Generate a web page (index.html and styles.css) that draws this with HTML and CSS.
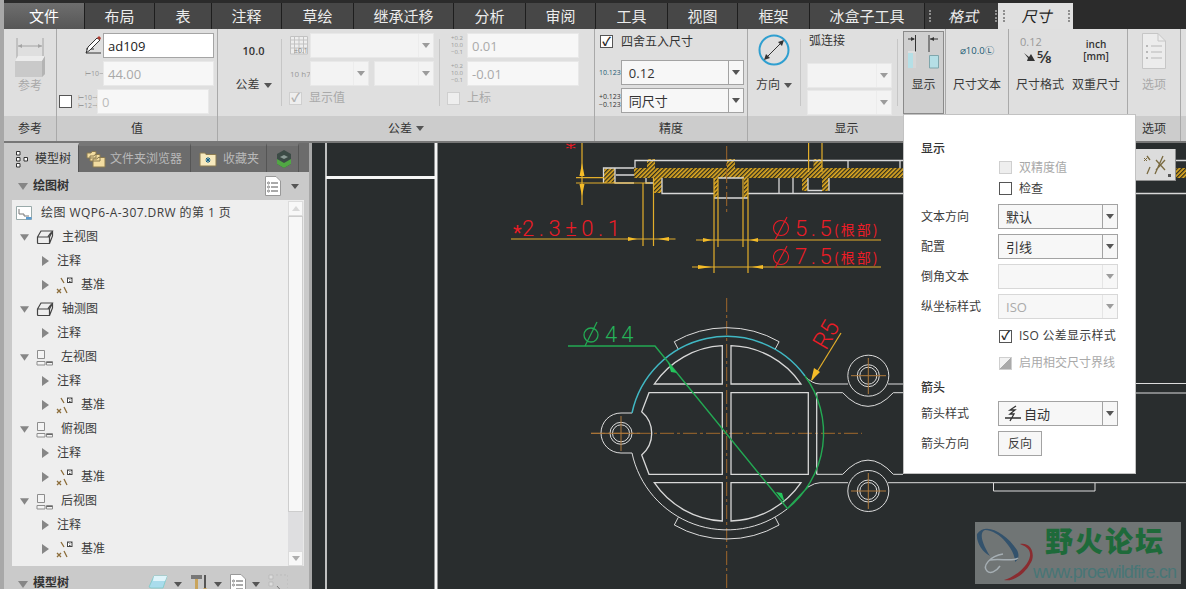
FILE: index.html
```html
<!DOCTYPE html>
<html lang="zh">
<head>
<meta charset="utf-8">
<title>尺寸</title>
<link rel="stylesheet" href="styles.css">
</head>
<body>
<svg class="defs" width="0" height="0" aria-hidden="true">
  <defs>
    <symbol id="tri-d" viewBox="0 0 10 7"><path d="M0 0H10L5 7Z" fill="#868686"/></symbol>
    <symbol id="tri-r" viewBox="0 0 7 10"><path d="M0 0V10L7 5Z" fill="#868686"/></symbol>
    <symbol id="arr" viewBox="0 0 8 5"><path d="M0 0H8L4 5Z" fill="#555"/></symbol>
    <symbol id="solid" viewBox="0 0 18 16"><path d="M1.500 8 5 2H16.500L13.500 8V14.500H2.500Q1.500 14.500 1.500 13.500ZM1.500 8H13.500M16.500 2V7L13.500 14.500M15 3.500 12 7.500" fill="none" stroke="#444" stroke-width="1.200"/></symbol>
    <symbol id="views" viewBox="0 0 17 17"><path d="M1.500 1.500H8.500V9.500H1.500ZM1 12.500H9V16H1ZM10.500 12.500H16.500V16H10.500Z" fill="#f4f4f4" stroke="#8d8d8d"/><path d="M10.500 13H16.500V14H10.500Z" fill="#666"/></symbol>
    <symbol id="datum" viewBox="0 0 17 17"><path d="M5 1 8 6M8 10 11 16" stroke="#8c6d3a" stroke-width="1.300"/><path d="M1 12 5 16M5 12 1 16" stroke="#8c6d3a" stroke-width="1.300"/><path d="M11 .5H16.500V6H11Z" fill="#444"/><path d="M12.500 5V2H15V5M12.500 3.600H15" fill="none" stroke="#fff"/></symbol>
  </defs>
</svg>

<nav class="tabbar">
  <div class="tab tab-file">文件</div>
  <div class="tab">布局</div>
  <div class="tab">表</div>
  <div class="tab">注释</div>
  <div class="tab">草绘</div>
  <div class="tab">继承迁移</div>
  <div class="tab">分析</div>
  <div class="tab">审阅</div>
  <div class="tab">工具</div>
  <div class="tab">视图</div>
  <div class="tab">框架</div>
  <div class="tab">冰盒子工具</div>
  <div class="tab tab-ctx">格式</div>
  <div class="tab tab-active">尺寸</div>
</nav>

<section class="ribbon">
  <div class="group g-ref">
    <div class="gbody">
      <div class="rbtn rbtn-ref">
        <svg class="ico-ref" width="30" height="42" viewBox="0 0 30 42"><path d="M2 2V22M28 2V22M3 10H27" fill="none" stroke="#a4a4a4"/><path d="M3 10 7 8V12ZM27 10 23 8V12Z" fill="#a4a4a4"/><path d="M0 25 3 20H30V38L27 41H0Z" fill="#c9c9c9"/><path d="M3 20H30L27 25H0Z" fill="#ececec"/><path d="M27 25 30 20V38L27 41Z" fill="#b4b4b4"/></svg>
        <span class="lbl off">参考</span>
      </div>
    </div>
    <div class="glabel">参考</div>
  </div>

  <div class="group g-val">
    <div class="gbody val-body">
      <div class="val-row">
        <svg width="17" height="19" viewBox="0 0 17 19"><path d="M1 17H16M1 13H4M6 13H9" stroke="#333" fill="none"/><path d="M1 17 3 11 12 2 15 4 5 14Z" fill="#fff" stroke="#333"/><path d="M12 2 14 0 16 2 15 4Z" fill="#b03a2e"/></svg>
        <div class="inp inp-strong">ad109</div>
      </div>
      <div class="val-row">
        <span class="dimtag">⊢10⊣</span>
        <div class="inp inp-off">44.00</div>
      </div>
      <div class="val-row val-row3">
        <span class="chk chk-dark"></span>
        <span class="dimtag dimtag2">⊢10⊣<br>⊢12⊣</span>
        <div class="inp inp-off inp-light">0</div>
      </div>
    </div>
    <div class="glabel">值</div>
  </div>

  <div class="group g-tol">
    <div class="gbody tol-body">
      <div class="tol-a">
        <span class="ten">10.0</span>
        <span class="lbl drop">公差 <svg width="8" height="5"><use href="#arr"/></svg></span>
      </div>
      <i class="vsep"></i>
      <div class="tol-b">
        <div class="tol-row">
          <svg class="tbl-ico" width="18" height="19" viewBox="0 0 18 19"><path d="M.5 .5H17.500V18H.5ZM.5 4H17.500M.5 8H17.500M.5 12H17.500M4.500 .5V18M9 .5V18M13.500 .5V18" fill="#eee" stroke="#c2c2c2"/><text x="4" y="17" class="tiny-t">±0.1</text></svg>
          <div class="sel sel-off sel-124"><span></span><b><svg width="8" height="5"><use href="#arr"/></svg></b></div>
        </div>
        <div class="tol-row">
          <span class="h7">10 h7</span>
          <div class="sel sel-off sel-59"><span></span><b><svg width="8" height="5"><use href="#arr"/></svg></b></div>
          <div class="sel sel-off sel-60"><span></span><b><svg width="8" height="5"><use href="#arr"/></svg></b></div>
        </div>
        <div class="tol-check">
          <span class="chk chk-off chk-on">✓</span><span class="off">显示值</span>
        </div>
      </div>
      <i class="vsep"></i>
      <div class="tol-c">
        <div class="tol-row">
          <span class="pm"><span>+0.2</span><span>10.0</span><span>−0.1</span></span>
          <div class="inp inp-off inp-112">0.01</div>
        </div>
        <div class="tol-row">
          <span class="pm"><span>+0.2</span><span>10.0</span><span>−0.1</span></span>
          <div class="inp inp-off inp-112">-0.01</div>
        </div>
        <div class="tol-check">
          <span class="chk chk-off"></span><span class="off">上标</span>
        </div>
      </div>
    </div>
    <div class="glabel">公差 <svg width="8" height="5"><use href="#arr"/></svg></div>
  </div>

  <div class="group g-pre">
    <div class="gbody pre-body">
      <div class="pre-check"><span class="chk chk-dark chk-on">✓</span>四舍五入尺寸</div>
      <div class="pre-row"><span class="pre-ico">10.123</span><div class="sel sel-125"><span>0.12</span><b><svg width="8" height="5"><use href="#arr"/></svg></b></div></div>
      <div class="pre-row"><span class="pre-ico pre-ico2">+0.123<br>−0.123</span><div class="sel sel-125"><span>同尺寸</span><b><svg width="8" height="5"><use href="#arr"/></svg></b></div></div>
    </div>
    <div class="glabel">精度</div>
  </div>

  <div class="group g-dsp">
    <div class="gbody dsp-body">
      <div class="rbtn rbtn-dir">
        <svg width="32" height="34" viewBox="0 0 32 34"><circle cx="16" cy="17" r="14.500" fill="none" stroke="#2f9fd0" stroke-width="2"/><path d="M7 26 25 8" stroke="#333"/><path d="M6 27 8 21 12 25ZM26 7 20 9 24 13Z" fill="#333"/></svg>
        <span class="lbl drop">方向 <svg width="8" height="5"><use href="#arr"/></svg></span>
      </div>
      <i class="vsep"></i>
      <div class="arc-col">
        <div class="arc-title">弧连接</div>
        <div class="sel sel-off sel-85"><span></span><b><svg width="8" height="5"><use href="#arr"/></svg></b></div>
        <div class="sel sel-off sel-85"><span></span><b><svg width="8" height="5"><use href="#arr"/></svg></b></div>
      </div>
      <i class="vsep vsep-r"></i>
      <div class="rbtn rbtn-show">
        <svg width="32" height="36" viewBox="0 0 32 36"><path d="M7.500 1V18M21 1V18M0 5H6M22 5H30" fill="none" stroke="#333"/><path d="M7 5 3 3V7ZM22 5 26 3V7Z" fill="#333"/><path d="M0 19H8V34H0Z" fill="#b5dfe6"/><path d="M0 18 H8" stroke="#eee"/><path d="M5 19H8V34H5Z" fill="#d6d6d6"/><path d="M21.500 21.500H30.500V34H21.500Z" fill="#b5dfe6" stroke="#7fa6ac"/></svg>
        <span class="lbl">显示</span>
      </div>
    </div>
    <div class="glabel">显示</div>
  </div>

  <div class="group g-txt">
    <div class="gbody">
      <div class="rbtn">
        <div class="ico-box"><span class="dimtxt">⌀10.0Ⓛ</span></div>
        <span class="lbl">尺寸文本</span>
      </div>
    </div>
    <div class="glabel"></div>
  </div>

  <div class="group g-fmt">
    <div class="gbody fmt-body">
      <div class="rbtn">
        <div class="ico-box ico-frac">
          <span class="frac-a">0.12</span>
          <span class="frac-b"><svg width="11" height="10" viewBox="0 0 11 10"><path d="M0 1 5 5 7 2 11 9 3 9 4 6Z" fill="#333"/></svg>5⁄8</span>
        </div>
        <span class="lbl">尺寸格式</span>
      </div>
      <div class="rbtn">
        <div class="ico-box ico-inch"><span>inch</span><span>[mm]</span></div>
        <span class="lbl">双重尺寸</span>
      </div>
    </div>
    <div class="glabel"></div>
  </div>

  <div class="group g-opt">
    <div class="gbody">
      <div class="rbtn">
        <div class="ico-box">
          <svg width="24" height="36" viewBox="0 0 24 36"><path d="M.5 .5H16L23.500 8V35.500H.5Z" fill="#ececec" stroke="#c6c6c6"/><path d="M16 .5V8H23.500" fill="none" stroke="#c6c6c6"/><path d="M9 13H20M9 19H20M9 25H20" stroke="#b8b8b8"/><path d="M4 13H6M4 19H6M4 25H6" stroke="#b8b8b8" stroke-width="2"/></svg>
        </div>
        <span class="lbl off">选项</span>
      </div>
    </div>
    <div class="glabel">选项</div>
  </div>
  <div class="group g-end"><div class="gbody"></div><div class="glabel"></div></div>
</section>

<main class="work">
  <aside class="panel">
    <div class="ptabs">
      <div class="ptab ptab-on">
        <svg width="14" height="18" viewBox="0 0 14 18"><path d="M1.500 1.500H5V5H1.500ZM1.500 7.500H5V11H1.500ZM1.500 13.500H5V17H1.500ZM9 7.500H12.500V11H9Z" fill="#fff" stroke="#333"/></svg>
        模型树
      </div>
      <div class="ptab ptab-2">
        <svg width="20" height="18" viewBox="0 0 20 18"><path d="M1 3H5L6 1.500H10V8H1ZM4 6H8L9 4.500H14V11H4ZM7 9H11L12 7.500H19V17H7Z" fill="#f2dca0" stroke="#8a7a50"/></svg>
        文件夹浏览器
      </div>
      <div class="ptab ptab-3">
        <svg width="18" height="16" viewBox="0 0 18 16"><path d="M1 2H6L7 3.500H17V15H1Z" fill="#f7e9bd" stroke="#8a7a50"/><path d="M9 6V12M6.500 9H11.500M7 7 11 11M11 7 7 11" stroke="#0e5f8a"/></svg>
        收藏夹
      </div>
      <div class="ptab ptab-4">
        <svg width="16" height="18" viewBox="0 0 16 18"><path d="M8 0 15 4V14L8 18 1 14V4Z" fill="#3c4b46"/><path d="M1 9 8 13 15 9V14L8 18 1 14Z" fill="#51a744"/><path d="M4 7 8 5 12 7 8 9Z" fill="#8a9a95"/></svg>
      </div>
    </div>
    <div class="phead">
      <svg class="phead-tri" width="10" height="7"><use href="#tri-d"/></svg>
      <strong>绘图树</strong>
      <svg class="phead-doc" width="16" height="20" viewBox="0 0 16 20"><path d="M.5 .5H11L15.500 5V19.500H.5Z" fill="#fff" stroke="#999"/><path d="M6 7H13M6 11H13M6 15H13" stroke="#555"/><circle cx="3.500" cy="7" r="1" fill="none" stroke="#555" stroke-width=".7"/><circle cx="3.500" cy="11" r="1" fill="none" stroke="#555" stroke-width=".7"/><circle cx="3.500" cy="15" r="1" fill="none" stroke="#555" stroke-width=".7"/></svg>
      <svg class="phead-arr" width="8" height="5"><use href="#arr"/></svg>
    </div>
    <div class="treebox">
      <ul class="tree">
        <li class="r r-root"><svg width="16" height="14" viewBox="0 0 16 14"><path d="M.5 .5H15.500V13.500H.5Z" fill="#fff" stroke="#9aa"/><path d="M3 3V8H8V10H13" fill="none" stroke="#777"/><path d="M10 11H15.500V13.500H10Z" fill="#5a9bd0"/></svg><span>绘图 WQP6-A-307.DRW 的第 1 页</span></li>
        <li class="r r-0"><svg class="t" width="9" height="7"><use href="#tri-d"/></svg><svg width="18" height="16"><use href="#solid"/></svg><span>主视图</span></li>
        <li class="r r-1"><svg class="t" width="7" height="10"><use href="#tri-r"/></svg><span>注释</span></li>
        <li class="r r-1 r-d"><svg class="t" width="7" height="10"><use href="#tri-r"/></svg><svg width="17" height="17"><use href="#datum"/></svg><span>基准</span></li>
        <li class="r r-0"><svg class="t" width="9" height="7"><use href="#tri-d"/></svg><svg width="18" height="16"><use href="#solid"/></svg><span>轴测图</span></li>
        <li class="r r-1"><svg class="t" width="7" height="10"><use href="#tri-r"/></svg><span>注释</span></li>
        <li class="r r-0"><svg class="t" width="9" height="7"><use href="#tri-d"/></svg><svg width="17" height="17"><use href="#views"/></svg><span>左视图</span></li>
        <li class="r r-1"><svg class="t" width="7" height="10"><use href="#tri-r"/></svg><span>注释</span></li>
        <li class="r r-1 r-d"><svg class="t" width="7" height="10"><use href="#tri-r"/></svg><svg width="17" height="17"><use href="#datum"/></svg><span>基准</span></li>
        <li class="r r-0"><svg class="t" width="9" height="7"><use href="#tri-d"/></svg><svg width="17" height="17"><use href="#views"/></svg><span>俯视图</span></li>
        <li class="r r-1"><svg class="t" width="7" height="10"><use href="#tri-r"/></svg><span>注释</span></li>
        <li class="r r-1 r-d"><svg class="t" width="7" height="10"><use href="#tri-r"/></svg><svg width="17" height="17"><use href="#datum"/></svg><span>基准</span></li>
        <li class="r r-0"><svg class="t" width="9" height="7"><use href="#tri-d"/></svg><svg width="17" height="17"><use href="#views"/></svg><span>后视图</span></li>
        <li class="r r-1"><svg class="t" width="7" height="10"><use href="#tri-r"/></svg><span>注释</span></li>
        <li class="r r-1 r-d"><svg class="t" width="7" height="10"><use href="#tri-r"/></svg><svg width="17" height="17"><use href="#datum"/></svg><span>基准</span></li>
      </ul>
      <div class="sbar">
        <div class="sb-btn"><svg width="8" height="5" viewBox="0 0 8 5"><path d="M0 5H8L4 0Z" fill="#b5b5b5"/></svg></div>
        <div class="sb-thumb"></div>
        <div class="sb-track"></div>
        <div class="sb-btn"><svg width="8" height="5"><use href="#arr"/></svg></div>
      </div>
    </div>
    <div class="pfoot">
      <svg class="phead-tri" width="10" height="7"><use href="#tri-d"/></svg>
      <strong>模型树</strong>
      <div class="pfoot-tools">
        <svg width="20" height="16" viewBox="0 0 20 16"><path d="M1 13 6 2H19L15 14H3Z" fill="#a9dcec" stroke="#8cc"/><path d="M6 2H19L17 7H5Z" fill="#dff4fa"/></svg>
        <svg class="fa" width="8" height="5"><use href="#arr"/></svg>
        <svg class="ft" width="18" height="20" viewBox="0 0 18 20"><path d="M1 1H12V5H1Z" fill="#777"/><path d="M5 5H8V20H5Z" fill="#c9a45c"/><path d="M15 1V14" stroke="#555" stroke-width="2"/><path d="M13.500 14H16.500V20H13.500Z" fill="#c9a45c"/></svg>
        <svg class="fa" width="8" height="5"><use href="#arr"/></svg>
        <svg class="ft" width="16" height="20" viewBox="0 0 16 20"><path d="M.5 .5H11L15.500 5V20H.5Z" fill="#fff" stroke="#999"/><path d="M6 7H13M6 11H13M6 15H13" stroke="#555"/><circle cx="3.500" cy="7" r="1" fill="none" stroke="#555" stroke-width=".7"/><circle cx="3.500" cy="11" r="1" fill="none" stroke="#555" stroke-width=".7"/></svg>
        <svg class="fa" width="8" height="5"><use href="#arr"/></svg>
        <svg class="ft" width="20" height="20" viewBox="0 0 20 20"><path d="M1 1H5V5H1ZM1 8H5V12H1Z" fill="#ddd" stroke="#bbb"/><path d="M8 1H20V14" fill="none" stroke="#bbb" stroke-dasharray="2 2"/><path d="M9 12 16 20" stroke="#777"/></svg>
      </div>
    </div>
  </aside>
  <div class="split"></div>

  <div class="canvas">
    <svg class="draw" width="874" height="446" viewBox="312 143 874 446">
      <defs>
        <pattern id="hatch" width="3" height="3" patternUnits="userSpaceOnUse" patternTransform="rotate(45)">
          <rect width="3" height="3" fill="#e2ab22"/><rect width="1.300" height="3" fill="#2a2a1e"/>
        </pattern>
      </defs>

      <g class="w3"><path d="M326 143V589"/></g>
      <path class="w4" d="M436 143V589M326 177.500H436"/>

      <g class="hatchfill">
        <rect x="634" y="168" width="552" height="10"/>
        <rect x="604" y="168" width="11" height="15"/>
        <rect x="647" y="159" width="8" height="9"/>
        <rect x="727" y="159" width="8" height="9"/>
        <rect x="813.500" y="159" width="8.500" height="9"/>
        <rect x="654" y="178" width="8" height="15"/>
        <rect x="714" y="178" width="4" height="20"/>
        <rect x="744" y="178" width="4" height="20"/>
        <rect x="802" y="178" width="6" height="13"/>
        <rect x="822" y="178" width="7" height="13"/>
      </g>
      <g class="w2">
        <path d="M635 168V160.500H1186M603.500 183V168H634M615 168V183H634M616 175H634M646 178V183H654"/>
        <path d="M848 160.500V168M900 160.500V168"/>
        <path d="M662 178V193.500H714M718 178H744M714 198H748M748 193.500H903M779 178V193M793 178V193M808 178V190.500H822M829 178V191"/>
        <path d="M1135 193.500H1186"/>
      </g>
      <path class="cl" d="M726.700 146V212"/>

      <g class="y1">
        <path d="M582 143V205M576 177.700H604M576 183H650"/>
        <path d="M643 183V246M653.500 178V246M714 178V273M748 178V273M718 178V247M743 178V247M808.600 143V172M822 143V172"/>
        <path d="M511 239H675.500M696 240H881M692 267H881"/>
      </g>
      <g class="ya">
        <path d="M582 163 579.500 176H584.500ZM582 196 579.500 184H584.500Z"/>
        <path d="M637 239 628 237V241ZM658 239 669 237V241Z"/>
        <path d="M712 240 703 238V242ZM750 240 758 238V242Z"/>
        <path d="M712 267 698 265V269ZM752 267 763 265V269Z"/>
      </g>

      <path class="redl2" d="M571 143.500V149M566.500 144 575.500 148M575.500 144 566.500 148"/>
      <g class="redt">
        <text x="513" y="240" class="t-star">*</text>
        <text x="522" y="236" class="t-dim">2.3±0.1</text>
        <text x="795" y="236" class="t-dim2">5.5</text>
        <text x="834" y="235" class="t-cjk">(根部)</text>
        <text x="795" y="264" class="t-dim2">7.5</text>
        <text x="834" y="263" class="t-cjk">(根部)</text>
        <text class="t-r5" transform="translate(826 351) rotate(-60)">R5</text>
      </g>
      <g class="redl">
        <circle cx="781" cy="228" r="7.500"/><path d="M775 240 787 217"/>
        <circle cx="781" cy="257" r="7.500"/><path d="M775 268 787 246"/>
      </g>

      <path class="cl" d="M726.700 298V589M591 433.300H862"/>
      <path class="w2" d="M654.300 384H722.300V345.700A87.600 87.600 0 0 0 654.300 384ZM731 345.700V384H801A87.600 87.600 0 0 0 731 345.700Z"/>
      <path class="w2" d="M649 392.700H722.300V474.300H649L641.700 455A28.400 28.400 0 0 0 641.700 411.700ZM731 392.700H808.300V474.300H731ZM816.700 392.700V474.300"/>
      <path class="w2" d="M654.300 482.700H722.300V521A87.600 87.600 0 0 1 654.300 482.700ZM731 521V482.700H801A87.600 87.600 0 0 1 731 521Z"/>
      <path class="w1" d="M678.300 349.300 674.300 341.700A105 105 0 0 1 779.100 341.700L775.100 349.300M678.300 517.300 674.300 525A105 105 0 0 0 779.100 525L775.100 517.300"/>
      <path class="w1" d="M632 453A97 97 0 0 0 787 509M632 413H621A20 20 0 0 0 621 453H632"/>
      <path class="w1" d="M805 376Q812 384 820 384H848M888 384H903M816.700 392.700H842.700Q868 420 893.300 392.700H903M816.700 474.300H842.700Q868 446 893.300 474.300H903M808 487Q815 482.700 820 482.700H848M888 482.700H1186M993.500 483V491H1095V483M1135 383.500H1186M1135 393H1186"/>
      <circle class="w1" cx="868.300" cy="375.700" r="20.500"/><circle class="w1" cx="868.300" cy="491" r="20.500"/>
      <g class="w1">
        <circle cx="621" cy="433.300" r="11"/><circle cx="621" cy="433.300" r="8.500"/>
        <circle cx="868.300" cy="375.700" r="11"/><circle cx="868.300" cy="375.700" r="8.500"/>
        <circle cx="868.300" cy="491" r="11"/><circle cx="868.300" cy="491" r="8.500"/>
      </g>
      <path class="cl2" d="M621 416V451M591 433.300H640M868.300 358V394M851 375.700H886M868.300 473V509M851 491H886"/>
      <path class="teal" d="M632 413A97 97 0 0 1 805 376"/>
      <path class="grn" d="M805 376A97 97 0 0 1 787 509L808 487"/>
      <path class="grn" d="M568 346H655L787 508"/>
      <path class="grna" d="M668 362 677 373 671 372ZM785 503 776 492 782 493Z"/>
      <text x="605" y="342" class="t-44">44</text>
      <circle class="grnl" cx="591" cy="335" r="7"/><path class="grnl" d="M585 346 597 322"/>
      <path class="y1" d="M841 333 812 380"/><path class="ya" d="M811 381 814 368 820 372Z"/>

      <rect class="wm" x="975" y="522" width="206" height="62"/>
      <path class="wm-b" d="M977 534C985 522 1005 532 1017 550C1020 556 1018 560 1015 562C1016 552 1000 530 985 530C980 532 980 540 990 556C982 552 976 542 977 534Z"/>
      <path class="wm-r" d="M1020 544C1032 542 1036 556 1030 564C1024 575 1012 582 1004 580C1012 578 1028 568 1030 556C1031 548 1024 546 1020 544Z"/>
      <path class="wm-g" d="M1003 554C990 556 982 566 987 571C990 574 996 572 1000 566M990 560C1000 558 1012 562 1018 558"/>
      <text x="1045" y="552" class="wm-t">野火论坛</text>
      <text x="1033" y="578" class="wm-u" textLength="144">www.proewildfire.cn</text>
    </svg>

    <div class="mini">
      <svg width="30" height="24" viewBox="0 0 30 24"><path d="M6 3 9 7M9 14 6 21M22 3 14 21M15 7 24 17M24 7 15 17" stroke="#7a6a40" stroke-width="1.300"/><path d="M3 5 6 8M6 5 3 8" stroke="#7a6a40"/><path d="M27 21H30V24H27Z" fill="#555"/></svg>
    </div>
  </div>
</main>

<div class="popup">
  <div class="pop-h">显示</div>
  <label class="pop-c"><span class="chk chk-off"></span><span class="off">双精度值</span></label>
  <label class="pop-c"><span class="chk chk-dark"></span><span>检查</span></label>
  <div class="pop-rows">
    <div class="pop-r"><span>文本方向</span><div class="sel sel-pop"><span>默认</span><b><svg width="8" height="5"><use href="#arr"/></svg></b></div></div>
    <div class="pop-r"><span>配置</span><div class="sel sel-pop"><span>引线</span><b><svg width="8" height="5"><use href="#arr"/></svg></b></div></div>
    <div class="pop-r"><span>倒角文本</span><div class="sel sel-pop sel-off2"><span></span><b><svg width="8" height="5"><use href="#arr"/></svg></b></div></div>
    <div class="pop-r"><span>纵坐标样式</span><div class="sel sel-pop sel-off2"><span>ISO</span><b><svg width="8" height="5"><use href="#arr"/></svg></b></div></div>
  </div>
  <label class="pop-c pop-c2"><span class="chk chk-dark chk-on">✓</span><span class="iso">ISO 公差显示样式</span></label>
  <label class="pop-c pop-c3"><span class="chk chk-off chk-tri"></span><span class="off">启用相交尺寸界线</span></label>
  <div class="pop-h pop-h2">箭头</div>
  <div class="pop-r pop-r2"><span>箭头样式</span><div class="sel sel-pop"><span class="arrow-opt"><svg width="16" height="18" viewBox="0 0 16 18"><path d="M0 13H16M11 1 5 5H10L5 9H9L5 16" fill="none" stroke="#333" stroke-width="1.300"/></svg>自动</span><b><svg width="8" height="5"><use href="#arr"/></svg></b></div></div>
  <div class="pop-r pop-r2"><span>箭头方向</span><div class="pbtn">反向</div></div>
</div>
</body>
</html>
```

FILE: styles.css
```css
* { box-sizing: border-box; }
html, body { margin: 0; padding: 0; }
body {
  position: relative;
  width: 1186px;
  height: 589px;
  overflow: hidden;
  padding-left: 4px;
  background: #a8a8a8;
  font-family: "Open Sans", "Noto Sans CJK SC", sans-serif;
  font-size: 12px;
  line-height: 16px;
  color: #3a3a3a;
}
.defs { position: absolute; }
svg { display: block; flex: none; }

/* tab bar */
.tabbar {
  height: 29px;
  padding-top: 3px;
  background: #2b2b2b;
  display: grid;
  grid-template-columns: 80px 70px 57px 70px 72px 100px 72px 70px 72px 70px 72px 115px 74px 75px;
  justify-content: start;
}
.tab {
  display: flex;
  align-items: center;
  justify-content: center;
  background: #474747;
  border-left: 1px solid #1e1e1e;
  color: #ececec;
  font-size: 15px;
}
.tab-file { background: linear-gradient(#6e6e6e, #565656); border-left: 0; color: #fff; }
.tab-ctx { font-style: italic; background: #3a3a3a; justify-content: space-between; padding: 0 1px 0 4px; }
.tab-active { background: #e0e0e0; color: #222; font-style: italic; border-left: 0; justify-content: space-between; padding: 0 3px 0 5px; }
.tab-ctx::before, .tab-ctx::after, .tab-active::before, .tab-active::after {
  content: "";
  height: 12px;
  border-left: 2px dotted #8e8e8e;
}

/* ribbon */
.ribbon { display: flex; height: 112px; background: #dfdfdf; }
.group { display: flex; flex-direction: column; border-right: 1px solid #a9a9a9; }
.gbody { height: 87px; display: flex; }
.glabel {
  height: 25px;
  background: #cccccc;
  display: flex;
  align-items: center;
  justify-content: center;
  gap: 4px;
  color: #333;
}
.g-ref { width: 53px; }
.g-val { width: 161px; }
.g-tol { width: 377px; }
.g-pre { width: 153px; }
.g-dsp { width: 198px; }
.g-txt { width: 63px; }
.g-fmt { width: 119px; }
.g-opt { width: 53px; }
.g-end { flex: 1; border-right: 0; }
.rbtn { flex: 1; display: flex; flex-direction: column; align-items: center; padding-top: 4px; }
.rbtn .lbl { margin-top: auto; margin-bottom: 23px; white-space: nowrap; }
.off { color: #a9a9a9; }
.lbl.off { color: #a9a9a9; }
.ico-box { height: 36px; display: flex; align-items: center; justify-content: center; flex-direction: column; }
.ico-ref { margin-top: 3px; }
.drop { display: inline-flex; align-items: center; gap: 4px; }

.inp {
  height: 25px;
  width: 111px;
  padding: 0 4px;
  display: flex;
  align-items: center;
  background: #fff;
  border: 1px solid #e6e6e6;
  font-size: 13px;
}
.inp-strong { border: 1px solid #a5a5a5; color: #222; }
.inp-off { color: #a9a9a9; background: #f7f7f7; border-color: #e8e8e8; }
.inp-light { color: #bbb; width: 112px; }
.inp-112 { width: 112px; color: #aaa; }

.sel {
  height: 25px;
  display: flex;
  background: #f7f7f7;
  border: 1px solid #a3a3a3;
}
.sel > span { flex: 1; padding: 0 7px; display: flex; align-items: center; font-size: 13px; color: #333; }
.sel > b { width: 15px; border-left: 1px solid #a3a3a3; display: flex; align-items: center; justify-content: center; }
.sel-off { background: #f3f3f3; border-color: #e8e8e8; }
.sel-off > b { border-left-color: #e8e8e8; opacity: .55; }
.sel-off2 { border-color: #d8d8d8; }
.sel-off2 > b { border-left-color: #d8d8d8; opacity: .55; }
.sel-off2 > span { color: #aaa; }
.sel-124 { width: 124px; }
.sel-59 { width: 59px; }
.sel-60 { width: 60px; }
.sel-125 { width: 125px; }
.sel-85 { width: 85px; }
.sel-pop { width: 120px; }

.chk {
  width: 13px;
  height: 13px;
  flex: none;
  display: inline-flex;
  align-items: center;
  justify-content: center;
  background: #fff;
  font-size: 12px;
  font-weight: 700;
  line-height: 1;
}
.chk-dark { border: 1px solid #555; color: #222; }
.chk-off { border: 1px solid #cfcfcf; background: #eee; color: #b0b0b0; }
.chk-tri { background: linear-gradient(135deg, #f2f2f2 50%, #aaa 50%); }

/* value group */
.val-body { flex-direction: column; align-items: flex-end; padding: 4px 3px 0 0; gap: 3px; }
.val-row { display: flex; align-items: center; gap: 1px; height: 25px; }
.val-row3 { padding-right: 5px; gap: 2px; }
.val-row3 .chk { margin-right: 4px; }
.dimtag { font-size: 7px; line-height: 8px; width: 17px; color: #9a9a9a; text-align: center; white-space: nowrap; }

/* tolerance */
.tol-body { align-items: stretch; }
.tol-a { width: 63px; display: flex; flex-direction: column; align-items: center; padding: 14px 0 0 8px; }
.ten { font-size: 11px; font-weight: 600; color: #333; }
.tol-a .drop { margin-top: 18px; }
.vsep { width: 1px; height: 67px; margin-top: 10px; background: #c6c6c6; flex: none; }
.tol-b { width: 157px; padding: 4px 0 0 8px; display: flex; flex-direction: column; gap: 3px; }
.tol-c { padding: 4px 0 0 8px; display: flex; flex-direction: column; gap: 3px; }
.tol-row { height: 25px; display: flex; align-items: center; gap: 1px; }
.tbl-ico { margin-right: 1px; }
.tiny-t { font-size: 7px; fill: #888; }
.h7 { width: 19px; font-size: 8px; color: #999; white-space: nowrap; }
.tol-b .sel-60 { margin-left: 4px; }
.tol-check { display: flex; align-items: center; gap: 7px; height: 22px; margin-left: -1px; margin-top: -2px; }
.pm { width: 18px; display: flex; flex-direction: column; align-items: center; font-size: 6px; line-height: 7px; color: #999; }

/* precision */
.pre-body { flex-direction: column; padding: 4px 3px 0 7px; }
.pre-check { display: flex; align-items: center; gap: 8px; height: 17px; margin-bottom: 10px; color: #333; font-size: 12px; margin-left: -2px; }
.pre-row { height: 25px; display: flex; align-items: center; justify-content: space-between; margin-bottom: 3px; }
.pre-ico { font-size: 7px; line-height: 8px; color: #1c5b74; margin-left: -3px; white-space: nowrap; }
.pre-ico2 { color: #333; }

/* display */
.dsp-body { align-items: stretch; }
.rbtn-dir { flex: none; width: 52px; }
.arc-col { width: 96px; padding: 3px 0 0 6px; display: flex; flex-direction: column; gap: 2px; }
.arc-title { height: 26px; padding-top: 1px; color: #333; margin-bottom: 3px; margin-left: 2px; }
.vsep-r { margin-right: 5px; }
.rbtn-show {
  flex: none;
  width: 41px;
  height: 83px;
  margin-top: 2px;
  background: #cfcfcf;
  border: 1px solid #8a8a8a;
  padding-top: 2px;
  overflow: hidden;
}
.rbtn-show .lbl { margin-bottom: 20px; }
.dimtxt { color: #1c5b74; font-size: 9.500px; white-space: nowrap; }

.fmt-body { padding: 0 7px; gap: 8px; }
.ico-frac { width: 40px; line-height: 12px; align-items: flex-start; padding-left: 2px; margin-right: 6px; }
.frac-a { color: #999; font-size: 11px; margin-left: 1px; }
.frac-b { display: flex; align-items: center; gap: 2px; margin-left: 5px; font-size: 17px; line-height: 18px; font-weight: 600; color: #333; white-space: nowrap; }
.ico-inch { font-size: 10px; line-height: 12px; font-weight: 600; color: #333; padding-bottom: 2px; }

/* main area */
.work { display: flex; height: 448px; border-top: 2px solid #777; }
.panel { width: 305px; background: #cacaca; display: flex; flex-direction: column; }
.split { width: 3px; background: #a8a8a8; }
.canvas { position: relative; width: 874px; height: 446px; background: #292d2e; overflow: hidden; }
.draw { display: block; }

.ptabs { height: 29px; display: flex; background: #6c6c6c; flex: none; }
.ptab { display: flex; align-items: center; gap: 4px; color: #b9b9b9; border-right: 1px solid #555; padding-left: 7px; border-top: 3px solid #777; }
.ptab-on { width: 75px; background: #cacaca; color: #333; border-top-color: #cacaca; padding-left: 11px; gap: 6px; }
.ptab-2 { width: 112px; }
.ptab-3 { width: 76px; padding-left: 8px; gap: 6px; }
.ptab-4 { width: 32px; padding-left: 9px; }

.phead { height: 28px; display: flex; align-items: center; padding-left: 14px; flex: none; }
.phead strong, .pfoot strong { font-weight: 700; margin-left: 5px; color: #333; }
.phead-doc { margin-left: auto; }
.phead-arr { margin: 0 10px 0 10px; }

.treebox { height: 366px; margin: 0 5px 0 8px; background: #eeeeee; display: flex; flex: none; }
.tree { list-style: none; margin: 0; padding: 1px 0 0; flex: 1; }
.r { height: 24px; display: flex; align-items: center; color: #3c3c3c; white-space: nowrap; }
.r-root { padding-left: 4px; gap: 9px; }
.r-root span { letter-spacing: .42px; }
.r-0 { padding-left: 8px; }
.r-0 .t { margin-right: 7px; }
.r-0 span { margin-left: 7px; }
.r-0 svg + svg + span { margin-left: 8px; }
.r-1 { padding-left: 30px; }
.r-1 .t { margin-right: 8px; }
.r-d svg + svg { margin-left: -1px; }
.r-d span { margin-left: 8px; }

.sbar { width: 16px; margin: 1px 0 0 0; display: flex; flex-direction: column; background: #dedee0; border-right: 1px solid #e8e8e8; }
.sb-btn { height: 15px; display: flex; align-items: center; justify-content: center; background: #f8f8f8; border: 1px solid #dcdcdc; }
.sb-btn svg { opacity: .45; }
.sb-thumb { height: 296px; background: #f7f7f7; border: 1px solid #cdcdcd; }
.sb-track { flex: 1; }

.pfoot { flex: 1; display: flex; align-items: flex-start; padding: 9px 0 0 14px; overflow: hidden; }
.pfoot .phead-tri { margin-top: 6px; }
.pfoot-tools { display: flex; align-items: flex-start; margin-left: 79px; margin-top: -1px; }
.pfoot-tools .fa { margin: 8px 8px 0 6px; }

.mini {
  position: absolute;
  left: 821px;
  top: 6px;
  width: 43px;
  height: 32px;
  padding: 4px 0 0 8px;
  background: #dcdcdc;
  border: 1px solid #8f8f8f;
  border-width: 0 1px 1px 0;
}

/* drawing strokes */
.draw path, .draw circle { fill: none; }
.w1 { stroke: #dcdcdc; stroke-width: 1; fill: none; }
.w2 { stroke: #d8d8d8; stroke-width: 1.300; fill: none; }
.w3 { stroke: #f2f2f2; stroke-width: 1.500; fill: none; }
.w4 { stroke: #f6f6f6; stroke-width: 3; fill: none; }
.cl { stroke: #a0682c; stroke-width: 1; stroke-dasharray: 14 3 3 3; }
.cl2 { stroke: #b07a3c; stroke-width: 1; }
.y1 { stroke: #e3ae2a; stroke-width: 1.200; fill: none; }
.draw .ya path, .draw path.ya { fill: #f5bc28; stroke: none; }
.hatchfill rect { fill: url(#hatch); }
.redt text { fill: #ec1c26; font-family: Roboto, "Liberation Sans", sans-serif; font-weight: 300; }
.t-dim { font-size: 22px; letter-spacing: 4.500px; }
.t-dim2 { font-size: 22px; letter-spacing: 3.500px; }
.redt .t-cjk { font-size: 14px; font-family: "Noto Sans CJK SC", sans-serif; font-weight: 400; letter-spacing: 2px; }
.redt .t-star { font-size: 20px; font-weight: 400; }
.t-r5 { font-size: 24px; }
.draw .redl2 { stroke: #ec1c26; stroke-width: 1.300; }
.redl circle, .redl path { stroke: #ec1c26; stroke-width: 1.100; }
.teal { stroke: #40b8c4; stroke-width: 1.500; }
.grn { stroke: #23a953; stroke-width: 1.400; }
.draw path.grna { fill: #25c45c; stroke: none; }
.grnl { stroke: #23a953; stroke-width: 1.300; }
.t-44 { fill: #25b359; font-family: Roboto, "Liberation Sans", sans-serif; font-weight: 300; font-size: 22px; letter-spacing: 4px; }

.wm { fill: #707575; }
.draw path.wm-b { fill: #33526c; }
.draw path.wm-r { fill: #8a2c30; }
.draw path.wm-g { stroke: #a5aeb3; stroke-width: 1.500; }
.wm-t { fill: #1e6a3a; font-family: "Noto Sans CJK SC", sans-serif; font-weight: 900; font-size: 28px; letter-spacing: 2px; }
.wm-u { fill: #487676; font-family: "Liberation Sans", sans-serif; font-size: 18px; }

/* popup */
.popup {
  position: absolute;
  left: 903px;
  top: 114px;
  width: 233px;
  height: 360px;
  background: #fff;
  border: 1px solid #c2c2c2;
  padding: 26px 17px 0;
  color: #3c3c3c;
}
.pop-h { height: 16px; font-weight: 500; color: #333; }
.pop-c { height: 21px; display: flex; align-items: center; gap: 7px; padding-left: 78px; white-space: nowrap; }
.iso { letter-spacing: .25px; }
.pop-rows { display: flex; flex-direction: column; gap: 5px; margin-top: 5px; }
.pop-r { display: grid; grid-template-columns: 77px 120px; align-items: center; height: 25px; white-space: nowrap; }
.pop-c2 { margin-top: 6px; height: 22px; }
.pop-c3 { margin-top: 5px; height: 22px; }
.pop-h2 { margin-top: 6px; }
.pop-r2 { margin-top: 5px; }
.arrow-opt { gap: 3px; padding-left: 6px !important; }
.pbtn { width: 44px; height: 25px; display: flex; align-items: center; justify-content: center; background: #f7f7f7; border: 1px solid #a3a3a3; }
```
